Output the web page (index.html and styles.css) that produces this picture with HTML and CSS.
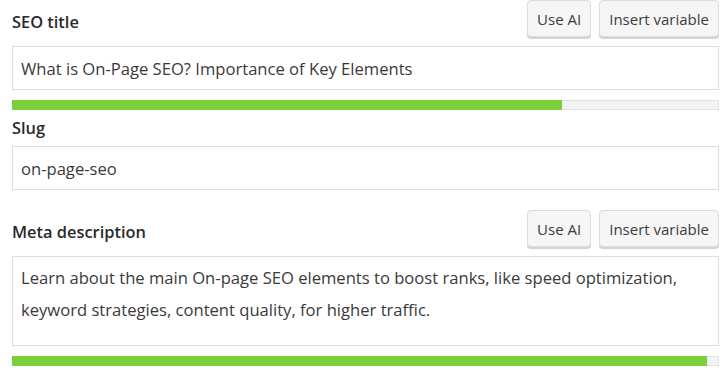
FILE: index.html
```html
<!DOCTYPE html>
<html lang="en">
<head>
  <meta charset="UTF-8">
  <meta name="viewport" content="width=device-width, initial-scale=1.0">
  <title>SEO fields</title>
  <link rel="stylesheet" href="styles.css">
</head>
<body>
  <div class="box">
    <div class="field">
      <div class="head">
        <label class="label" for="title">SEO title</label>
        <div class="actions">
          <button class="btn">Use AI</button>
          <button class="btn">Insert variable</button>
        </div>
      </div>
      <input class="input" id="title" type="text" value="What is On-Page SEO? Importance of Key Elements">
      <div class="progress"><div class="bar" style="width: 78%"></div></div>
    </div>

    <div class="field slug">
      <label class="label" for="slug">Slug</label>
      <input class="input" id="slug" type="text" value="on-page-seo">
    </div>

    <div class="field meta">
      <div class="head">
        <label class="label" for="desc">Meta description</label>
        <div class="actions">
          <button class="btn">Use AI</button>
          <button class="btn">Insert variable</button>
        </div>
      </div>
      <textarea class="input area" id="desc">Learn about the main On-page SEO elements to boost ranks, like speed optimization, keyword strategies, content quality, for higher traffic.</textarea>
      <div class="progress"><div class="bar" style="width: 98.6%"></div></div>
    </div>
  </div>
</body>
</html>
```

FILE: styles.css
```css
* {
  padding: 0;
  margin: 0;
  box-sizing: border-box;
}
body {
  background: #fff;
  font-family: "Open Sans", "Noto Sans", sans-serif;
  color: #333;
}
.box {
  padding: 0 9px 0 12px;
}
.field {
  display: flex;
  flex-direction: column;
}
.head {
  display: flex;
  justify-content: space-between;
  align-items: center;
  height: 39px;
  margin-bottom: 7px;
}
.label {
  font-size: 16.4px;
  font-weight: 600;
  line-height: 22px;
  color: #2a2a2a;
  padding-top: 4px;
}
.actions {
  display: flex;
  gap: 8px;
  height: 39px;
}
.btn {
  font-family: inherit;
  font-size: 15px;
  color: #3c3c3c;
  background: #f6f6f6;
  border: 1px solid #dcdcdc;
  border-radius: 4px;
  box-shadow: 0 2px 0 #d4d4d4;
  padding: 0 9px;
  height: 37px;
  cursor: pointer;
}
.input {
  width: 100%;
  height: 44px;
  border: 1px solid #dedede;
  background: #fff;
  font-family: inherit;
  font-size: 16.6px;
  color: #3a3a3a;
  padding: 0 8px;
  outline: none;
}
.area {
  height: 90px;
  resize: none;
  line-height: 32px;
  padding: 5px 8px 0;
  overflow: hidden;
}
.progress {
  height: 10px;
  margin-top: 10px;
  background: #f3f3f3;
  border: 1px solid #e2e2e2;
}
.progress .bar {
  height: 10px;
  margin: -1px 0 0 -1px;
  background: #7ad03a;
}
.slug .label {
  padding-top: 0;
  margin: 7px 0 7px;
}
.meta {
  margin-top: 20px;
}
```
